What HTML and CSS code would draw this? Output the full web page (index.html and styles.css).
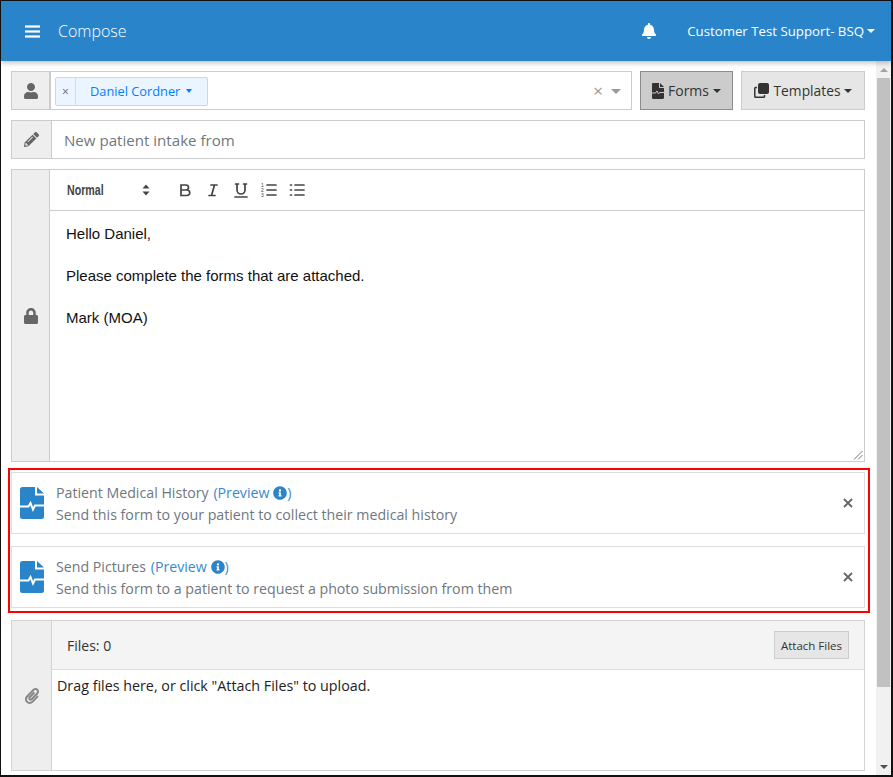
FILE: index.html
```html
<!DOCTYPE html>
<html lang="en">
<head>
<meta charset="utf-8">
<title>Compose</title>
<link rel="stylesheet" href="styles.css">
</head>
<body>
<div class="frame">
  <header class="topbar">
    <svg class="ic-bars" viewBox="0 0 15 13"><rect width="15" height="2.2" y="0.4"/><rect width="15" height="2.2" y="5.4"/><rect width="15" height="2.2" y="10.4"/></svg>
    <span class="title">Compose</span>
    <svg class="ic-bell" viewBox="0 0 448 512"><path d="M224 512c35.32 0 63.97-28.65 63.97-64H160.03c0 35.35 28.65 64 63.97 64zm215.39-149.71c-19.32-20.76-55.47-51.99-55.47-154.29 0-77.7-54.48-139.9-127.94-155.16V32c0-17.67-14.32-32-31.98-32s-31.98 14.33-31.98 32v20.84C118.56 68.1 64.08 130.3 64.08 208c0 102.3-36.15 133.53-55.47 154.29-6 6.45-8.66 14.16-8.61 21.71.11 16.4 12.98 32 32.1 32h383.8c19.12 0 32-15.6 32.1-32 .05-7.55-2.61-15.27-8.61-21.71z"/></svg>
    <span class="account">Customer Test Support- BSQ</span><span class="caret caret-white"></span>
  </header>
  <div class="body">
    <main class="main">
      <div class="row row-to">
        <div class="addon addon-to">
          <svg class="ic-addon" viewBox="0 0 448 512"><path d="M224 256c70.7 0 128-57.3 128-128S294.7 0 224 0 96 57.3 96 128s57.3 128 128 128zm89.6 32h-16.7c-22.2 10.2-46.9 16-72.9 16s-50.6-5.8-72.9-16h-16.7C60.2 288 0 348.2 0 422.4V464c0 26.5 21.5 48 48 48h352c26.5 0 48-21.5 48-48v-41.6c0-74.2-60.2-134.4-134.4-134.4z"/></svg>
        </div>
        <div class="select">
          <div class="chip">
            <span class="chip-x">×</span>
            <span class="chip-label">Daniel Cordner<span class="chip-caret"></span></span>
          </div>
          <span class="select-clear">×</span>
          <span class="select-arrow"></span>
        </div>
        <button class="btn btn-active">
          <svg class="ic-doc" viewBox="0 0 12 16"><path d="M1.2 0H7v4.2c0 .5.4.8.8.8H12v9.8c0 .7-.5 1.2-1.2 1.2H1.2C.5 16 0 15.500 0 14.800V1.200C0 .5.500 0 1.200 0zM8 0l4 4H8z"/><path class="pulse-dark" d="M0 10h3.500l1.500-2 1.500 3 1.200-1.500h4.500"/></svg>
          Forms<span class="caret"></span>
        </button>
        <button class="btn btn-tpl">
          <svg class="ic-clone" viewBox="0 0 15 15"><rect x="4" y="0" width="11" height="11" rx="2"/><path class="clone-back" d="M3 4.500H1.600A.8.8 0 0 0 .8 5.300V13.400A.8.8 0 0 0 1.600 14.200H9.700A.8.8 0 0 0 10.500 13.400V12"/></svg>
          Templates<span class="caret"></span>
        </button>
      </div>

      <div class="row row-subject">
        <div class="addon addon-wide">
          <svg class="ic-addon ic-pencil" viewBox="0 0 512 512"><path d="M497.900 142.100l-46.100 46.100c-4.700 4.700-12.300 4.700-17 0l-111-111c-4.700-4.700-4.700-12.300 0-17l46.100-46.100c18.700-18.700 49.100-18.700 67.900 0l60.100 60.100c18.800 18.700 18.800 49.100 0 67.900zM284.200 99.800L21.600 362.400.4 483.900c-2.900 16.400 11.400 30.600 27.800 27.800l121.500-21.300 262.600-262.600c4.700-4.700 4.700-12.300 0-17l-111-111c-4.800-4.700-12.400-4.700-17.100 0zM124.100 339.900c-5.500-5.500-5.500-14.300 0-19.800l154-154c5.500-5.500 14.300-5.500 19.800 0s5.500 14.300 0 19.800l-154 154c-5.500 5.500-14.300 5.500-19.800 0zM88 424h48v36.300l-64.500 11.300-31.100-31.100L51.700 376H88v48z"/></svg>
        </div>
        <div class="subject">New patient intake from</div>
      </div>

      <div class="row row-editor">
        <div class="addon addon-to">
          <svg class="ic-addon ic-lock" viewBox="0 0 448 512"><path d="M400 224h-24v-72C376 68.200 307.800 0 224 0S72 68.200 72 152v72H48c-26.500 0-48 21.500-48 48v192c0 26.500 21.500 48 48 48h352c26.500 0 48-21.500 48-48V272c0-26.500-21.500-48-48-48zm-104 0H152v-72c0-39.700 32.300-72 72-72s72 32.300 72 72v72z"/></svg>
        </div>
        <div class="editor">
          <div class="toolbar">
            <span class="picker"><span class="picker-text">Normal</span></span>
            <svg class="ic-updown" viewBox="0 0 8 12"><path d="M4 0.500L7.500 4.500H.5zM4 11.500L.5 7.500H7.500z"/></svg>
            <svg class="tb tb-b" viewBox="0 0 18 18"><path d="M5 4h5a2.500 2.500 0 0 1 0 5H5zM5 9h6a2.750 2.750 0 0 1 0 5.500H5z"/></svg>
            <svg class="tb" viewBox="0 0 18 18"><path d="M7 4h6M5 14.500h6M10.500 4 7.500 14.500"/></svg>
            <svg class="tb" viewBox="0 0 18 18"><path d="M5 3v6a4 4 0 0 0 8 0V3M3.500 3H6.500M11.500 3H14.500M3 16H15"/></svg>
            <svg class="tb" viewBox="0 0 18 18"><path d="M7 4H16M7 9H16M7 14H16"/><text class="tb-num" x="1" y="6">1</text><text class="tb-num" x="1" y="11">2</text><text class="tb-num" x="1" y="16">3</text></svg>
            <svg class="tb" viewBox="0 0 18 18"><path d="M7 4H16M7 9H16M7 14H16M2.500 4H3.500M2.500 9H3.500M2.500 14H3.500"/></svg>
          </div>
          <div class="content">
            <p>Hello Daniel,</p>
            <p><br></p>
            <p>Please complete the forms that are attached.</p>
            <p><br></p>
            <p>Mark (MOA)</p>
            <svg class="grip" viewBox="0 0 10 10"><path d="M9.500 1 1 9.500M9.500 5 5 9.500"/></svg>
          </div>
        </div>
      </div>

      <section class="highlight">
        <div class="card">
          <svg class="ic-form" viewBox="0 0 24 32"><path d="M2.500 0H15V8.500H24V29.500A2.500 2.500 0 0 1 21.500 32H2.500A2.500 2.500 0 0 1 0 29.500V2.500A2.500 2.500 0 0 1 2.500 0zM17 0l7 6.500h-7z"/><path class="pulse" d="M0 19.500H8.500L10.500 16 13 22.500 15 18.500H24"/></svg>
          <div class="card-text">
            <div class="card-title">Patient Medical History <span class="preview">(Preview <svg class="ic-info" viewBox="0 0 512 512"><path d="M256 8C119.043 8 8 119.083 8 256c0 136.997 111.043 248 248 248s248-111.003 248-248C504 119.083 392.957 8 256 8zm0 110c23.196 0 42 18.804 42 42s-18.804 42-42 42-42-18.804-42-42 18.804-42 42-42zm56 254c0 6.627-5.373 12-12 12h-88c-6.627 0-12-5.373-12-12v-24c0-6.627 5.373-12 12-12h12v-64h-12c-6.627 0-12-5.373-12-12v-24c0-6.627 5.373-12 12-12h64c6.627 0 12 5.373 12 12v100h12c6.627 0 12 5.373 12 12v24z"/></svg>)</span></div>
            <div class="card-desc">Send this form to your patient to collect their medical history</div>
          </div>
          <svg class="ic-close" viewBox="0 0 10 10"><path d="M1 1 9 9M9 1 1 9"/></svg>
        </div>
        <div class="card">
          <svg class="ic-form" viewBox="0 0 24 32"><path d="M2.500 0H15V8.500H24V29.500A2.500 2.500 0 0 1 21.500 32H2.500A2.500 2.500 0 0 1 0 29.500V2.500A2.500 2.500 0 0 1 2.500 0zM17 0l7 6.500h-7z"/><path class="pulse" d="M0 19.500H8.500L10.500 16 13 22.500 15 18.500H24"/></svg>
          <div class="card-text">
            <div class="card-title">Send Pictures <span class="preview">(Preview <svg class="ic-info" viewBox="0 0 512 512"><path d="M256 8C119.043 8 8 119.083 8 256c0 136.997 111.043 248 248 248s248-111.003 248-248C504 119.083 392.957 8 256 8zm0 110c23.196 0 42 18.804 42 42s-18.804 42-42 42-42-18.804-42-42 18.804-42 42-42zm56 254c0 6.627-5.373 12-12 12h-88c-6.627 0-12-5.373-12-12v-24c0-6.627 5.373-12 12-12h12v-64h-12c-6.627 0-12-5.373-12-12v-24c0-6.627 5.373-12 12-12h64c6.627 0 12 5.373 12 12v100h12c6.627 0 12 5.373 12 12v24z"/></svg>)</span></div>
            <div class="card-desc">Send this form to a patient to request a photo submission from them</div>
          </div>
          <svg class="ic-close" viewBox="0 0 10 10"><path d="M1 1 9 9M9 1 1 9"/></svg>
        </div>
      </section>

      <div class="row row-files">
        <div class="addon addon-wide addon-light">
          <svg class="ic-addon ic-clip" viewBox="0 0 448 512"><path d="M43.246 466.142c-58.430-60.289-57.341-157.511 1.386-217.581L254.392 34c44.316-45.332 116.351-45.336 160.671 0 43.890 44.894 43.943 117.329 0 162.276L232.214 383.128c-29.855 30.537-78.633 30.111-107.982-.998-28.275-29.970-27.368-77.473 1.452-106.953l143.743-146.835c6.182-6.314 16.312-6.422 22.626-.241l22.861 22.379c6.315 6.182 6.422 16.312.241 22.626L171.427 319.927c-4.932 5.045-5.236 13.428-.648 18.292 4.372 4.634 11.245 4.711 15.688.165l182.849-186.851c19.613-20.062 19.613-52.725-.011-72.798-19.189-19.627-49.957-19.637-69.154 0L90.390 293.295c-34.763 35.560-35.299 93.120-1.191 128.313 34.010 35.093 88.985 35.137 123.058.286l172.060-175.999c6.177-6.319 16.307-6.433 22.626-.256l22.877 22.364c6.319 6.177 6.434 16.307.256 22.626l-172.060 175.998c-59.576 60.938-155.943 60.216-214.770-.485z"/></svg>
        </div>
        <div class="files">
          <div class="files-head">
            <span>Files: 0</span>
            <button class="btn-attach">Attach Files</button>
          </div>
          <div class="files-body">Drag files here, or click "Attach Files" to upload.</div>
        </div>
      </div>
    </main>
    <aside class="scrollbar">
      <span class="sb-up"></span>
      <div class="sb-thumb"></div>
      <span class="sb-down"></span>
    </aside>
  </div>
</div>
</body>
</html>
```

FILE: styles.css
```css
* { box-sizing: border-box; }
html, body { margin: 0; height: 100%; overflow: hidden; background: #fff; }
body { font-family: "Open Sans", "Noto Sans", sans-serif; font-size: 14px; color: #333; }
svg { display: block; flex: none; }

.frame {
  width: 893px; height: 777px;
  border: 1px solid #111;
  border-right-width: 2px;
  border-bottom-width: 2px;
  display: flex; flex-direction: column;
  overflow: hidden;
}

.topbar {
  height: 60px; flex: none;
  background: #2a84c9;
  color: #fff;
  display: flex; align-items: center;
  padding: 0 16px 0 24px;
  box-shadow: 0 2px 5px rgba(0,0,0,.25);
  position: relative; z-index: 2;
}
.ic-bars { width: 15px; height: 13px; fill: #fff; }
.title { margin-left: 18px; font-size: 16px; font-weight: 300; }
.ic-bell { width: 14px; height: 16px; fill: #fff; margin-left: auto; margin-right: 1px; }
.account { margin-left: 30px; font-size: 13.25px; }
.caret {
  display: inline-block; width: 0; height: 0; margin-left: 4px;
  border-left: 4px solid transparent; border-right: 4px solid transparent;
  border-top: 4px solid currentColor;
}
.caret-white { margin-left: 3px; margin-top: -1px; }

.body { flex: 1; display: flex; min-height: 0; }
.main { width: 874px; flex: none; padding: 10px 10px 0; display: flex; flex-direction: column; }

.row { display: flex; flex: none; }
.row-to { height: 39px; gap: 8px; }
.row-subject { height: 39px; margin-top: 10px; }
.row-editor { height: 293px; margin-top: 10px; }
.row-files { height: 151px; margin-top: 7px; }

.addon {
  background: #eee;
  border: 1px solid #ccc;
  display: flex; align-items: center; justify-content: center;
  flex: none;
}
.addon-to { width: 39px; }
.addon-wide { width: 41px; }
.addon-light { border-color: #d4d4d4; }
.ic-addon { width: 14px; height: 16px; fill: #666; }
.ic-pencil { width: 15px; height: 15px; }
.ic-clip { width: 14px; height: 16px; fill: #888; }

.select {
  flex: 1;
  margin-left: -8px;
  border: 1px solid #ccc;
  display: flex; align-items: center;
  padding-left: 4px;
  min-width: 0;
}
.chip {
  height: 29px; display: flex;
  margin-top: 1px;
  background: #ebf5ff;
  border: 1px solid #b8dcff;
  border-radius: 2px;
  color: #007eff;
  font-size: 12.8px;
}
.chip-x {
  width: 20px; border-right: 1px solid #c2e0ff;
  display: flex; align-items: center; justify-content: center;
  color: #666; font-size: 12px;
}
.chip-label { display: flex; align-items: center; padding: 0 15px 0 14px; }
.chip-caret {
  margin-left: 6px; width: 0; height: 0;
  border-left: 3px solid transparent; border-right: 3px solid transparent;
  border-top: 4px solid #007eff;
}
.select-clear { margin-left: auto; color: #999; font-size: 17px; line-height: 1; }
.select-arrow {
  margin: 2px 10px 0 8px; width: 0; height: 0;
  border-left: 5px solid transparent; border-right: 5px solid transparent;
  border-top: 5px solid #999;
}

.btn {
  height: 39px; padding: 0; margin: 0;
  font: inherit; color: #333;
  display: flex; align-items: center; justify-content: center;
  flex: none;
}
.btn-active { width: 93px; background: #ccc; border: 1px solid #8c8c8c; }
.btn-tpl { width: 124px; background: #e6e6e6; border: 1px solid #ccc; font-size: 13.8px; }
.ic-doc { width: 12px; height: 16px; fill: #333; margin-right: 4px; }
.pulse-dark { fill: none; stroke: #ccc; stroke-width: 1; }
.ic-clone { width: 15px; height: 15px; fill: #333; margin-right: 5px; }
.clone-back { fill: none; stroke: #333; stroke-width: 1.5; }

.subject {
  flex: 1; border: 1px solid #ccc; border-left: 0;
  display: flex; align-items: center;
  padding-left: 12px;
  font-size: 15.1px; color: #6f7780;
}

.editor { flex: 1; border: 1px solid #ccc; border-left: 0; display: flex; flex-direction: column; }
.toolbar { height: 41px; flex: none; border-bottom: 1px solid #ccc; display: flex; align-items: center; padding-left: 17px; }
.picker {
  width: 75px;
  font-family: "Liberation Sans", sans-serif;
  font-size: 14px; font-weight: 700; color: #444;
}
.picker-text { display: inline-block; transform: scaleX(.76); transform-origin: left center; }
.ic-updown { width: 8px; height: 12px; fill: #444; margin-right: 26px; }
.tb { width: 18px; height: 18px; margin-right: 10px; fill: none; stroke: #444; stroke-width: 1.700; stroke-linecap: round; }
.tb-num { font: 5px "Liberation Sans", sans-serif; fill: #444; stroke: none; }
.content {
  flex: 1; position: relative;
  padding: 12px 16px;
  font-family: "Liberation Sans", Arial, sans-serif;
  font-size: 15px; line-height: 21px; color: #111;
}
.content p { margin: 0; }
.grip { position: absolute; right: 1px; bottom: 1px; width: 10px; height: 10px; fill: none; stroke: #777; stroke-width: 1; }

.highlight {
  flex: none;
  margin: 6px -5px 0 -3px;
  height: 145px;
  border: 2px solid #f00;
  padding: 2px 3px 3px 1px;
  display: flex; flex-direction: column; gap: 12px;
}
.card {
  height: 62px; flex: none;
  border: 1px solid #ddd;
  display: flex; align-items: center;
  padding: 0 10px 0 8px;
  color: #6f7780;
}
.ic-form { width: 24px; height: 32px; fill: #2a84c9; margin-right: 12px; }
.pulse { fill: none; stroke: #fff; stroke-width: 2; }
.card-text { flex: 1; min-width: 0; font-size: 14.2px; line-height: 22px; padding-top: 2px; }
.preview { color: #3a8ac9; margin-left: 1px; }
.ic-info { display: inline-block; width: 14px; height: 14px; fill: #2a84c9; vertical-align: -2px; }
.ic-close { width: 10px; height: 10px; fill: none; stroke: #666; stroke-width: 1.800; margin-right: 1px; }

.files { flex: 1; border: 1px solid #d4d4d4; border-left: 0; display: flex; flex-direction: column; }
.files-head {
  height: 49px; flex: none;
  background: #f4f4f4;
  border-bottom: 1px solid #ddd;
  display: flex; align-items: center; justify-content: space-between;
  padding: 0 15px;
}
.btn-attach {
  width: 75px; height: 28px; padding: 0;
  background: #e6e6e6; border: 1px solid #ccc;
  font: inherit; font-size: 11.5px; color: #333;
}
.files-body { padding: 6px 5px; color: #222; font-size: 14.3px; }

.scrollbar { width: 15px; flex: none; margin-left: 1px; background: #f1f1f1; display: flex; flex-direction: column; align-items: center; padding: 0 1px; }
.sb-up {
  margin-top: 7px; margin-bottom: 6px; width: 0; height: 0;
  border-left: 4px solid transparent; border-right: 4px solid transparent;
  border-bottom: 4px solid #a3a3a3;
}
.sb-thumb { width: 13px; height: 609px; background: #c1c1c1; flex: none; }
.sb-down {
  margin-top: auto; margin-bottom: 6px; width: 0; height: 0;
  border-left: 4px solid transparent; border-right: 4px solid transparent;
  border-top: 4px solid #505050;
}
```
